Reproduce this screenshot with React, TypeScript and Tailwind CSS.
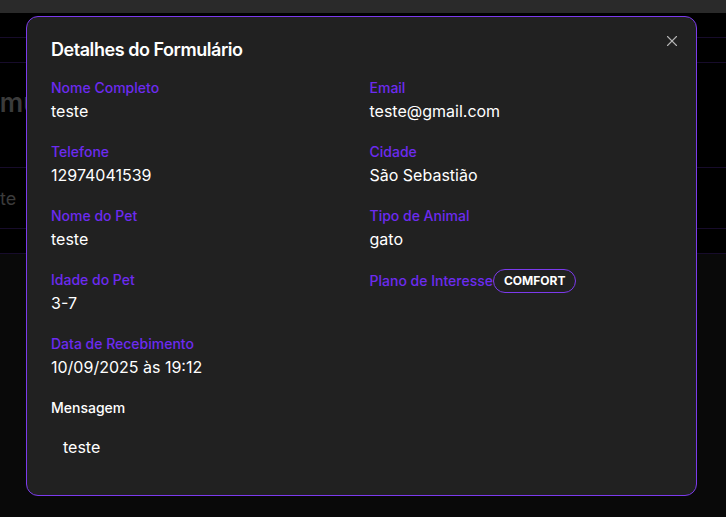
import { XIcon } from "lucide-react";

type Field = { label: string; value?: string; badge?: string };

const fields: Field[] = [
  { label: "Nome Completo", value: "teste" },
  { label: "Email", value: "teste@gmail.com" },
  { label: "Telefone", value: "12974041539" },
  { label: "Cidade", value: "São Sebastião" },
  { label: "Nome do Pet", value: "teste" },
  { label: "Tipo de Animal", value: "gato" },
  { label: "Idade do Pet", value: "3-7" },
  { label: "Plano de Interesse", badge: "COMFORT" },
  { label: "Data de Recebimento", value: "10/09/2025 às 19:12" },
];

function DetailField({ field }: { field: Field }) {
  if (field.badge) {
    return (
      <div className="-mt-px flex items-center self-start">
        <span className="text-sm leading-5 font-medium text-[#6d2bf0]">{field.label}</span>
        <span className="inline-flex items-center rounded-full border border-[#7c3aed] px-2.5 py-[3px] text-xs leading-4 font-bold text-white">
          {field.badge}
        </span>
      </div>
    );
  }
  return (
    <div className="flex flex-col">
      <span className="text-sm leading-5 font-medium text-[#6d2bf0]">{field.label}</span>
      <span className="mt-px text-base leading-6 text-white">{field.value}</span>
    </div>
  );
}

export default function App() {
  return (
    <div
      className="relative h-[517px] w-[726px] overflow-hidden bg-black"
      style={{ fontFamily: "Inter, 'Noto Sans', sans-serif" }}
    >
      {/* page behind the overlay */}
      <div className="flex h-full flex-col">
        <div className="h-[13px] bg-[#2a2a2a]" />
        <div className="h-[25px] border-b border-[#170c2b]" />
        <div className="h-[25px] border-b border-[#170c2b]" />
        <div className="h-[105px] border-b border-[#170c2b] pt-[24px]">
          <div className="w-[26px] overflow-hidden">
            <span className="-ml-[41px] block whitespace-nowrap text-[26px] leading-8 font-semibold text-[#3b3b3b]">Formulários</span>
          </div>
        </div>
        <div className="flex h-[61px] items-center border-b border-[#170c2b]">
          <span className="text-[18px] text-[#3b3b3b]">te</span>
        </div>
        <div className="h-[25px] border-b border-[#170c2b]" />
        <div className="flex-1 bg-[#090909]" />
      </div>

      {/* dialog */}
      <div className="absolute left-[26px] top-[16px] w-[671px] rounded-xl border border-[#7c3aed] bg-[#212121] p-6">
        <button className="absolute right-[15px] top-[15px] text-[#b5b5b5]">
          <XIcon size={18} strokeWidth={1.5} />
        </button>
        <div className="flex flex-col gap-[19px]">
          <h2 className="text-lg leading-none font-semibold tracking-tight text-white">Detalhes do Formulário</h2>
          <div className="grid grid-cols-2 gap-x-4 gap-y-[19px]">
            {fields.map((f) => (
              <DetailField key={f.label} field={f} />
            ))}
          </div>
          <div className="flex flex-col">
            <span className="text-sm leading-5 font-medium text-white">Mensagem</span>
            <div className="mt-[5px] p-3 text-base leading-6 text-white">teste</div>
          </div>
        </div>
      </div>
    </div>
  );
}
